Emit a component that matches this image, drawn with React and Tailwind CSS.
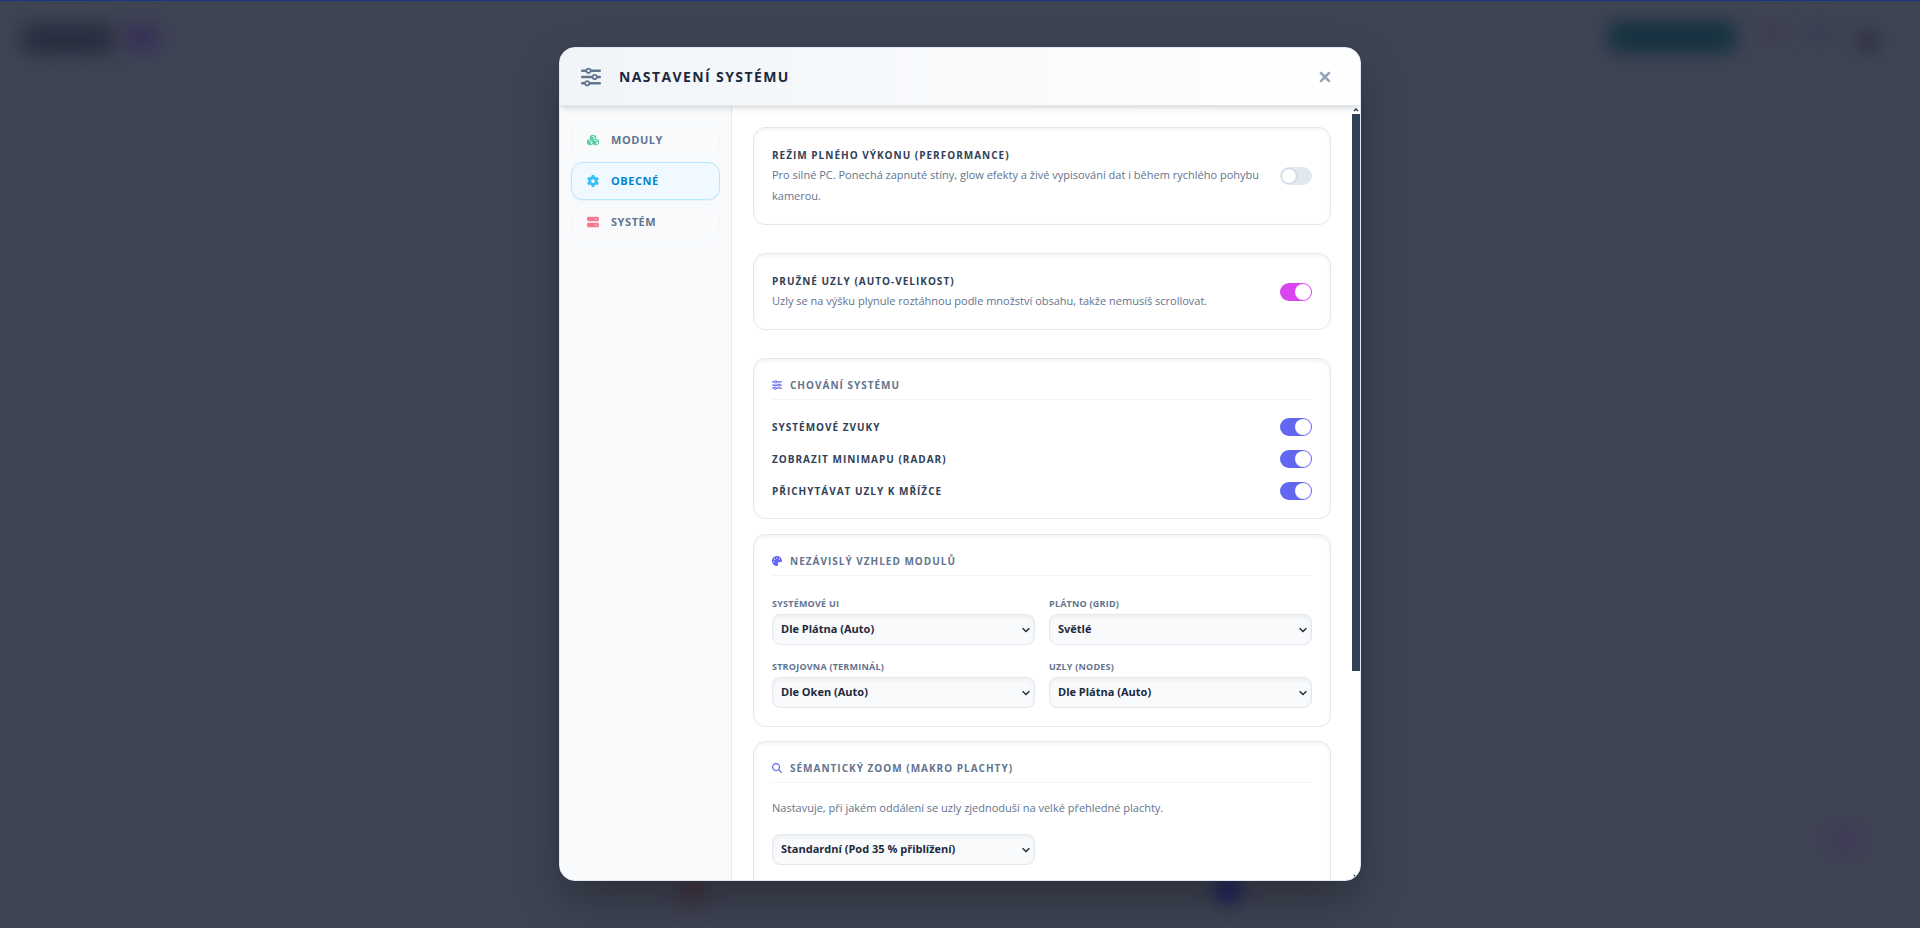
import { useState } from "react";
import { FaCubes, FaGear, FaMagnifyingGlass, FaPalette, FaServer, FaSliders, FaXmark } from "react-icons/fa6";

const tabs = [
  { id: "modules", label: "Moduly", icon: FaCubes, iconClass: "text-[#10b981]/70" },
  { id: "general", label: "Obecné", icon: FaGear, iconClass: "text-[#38bdf8]" },
  { id: "system", label: "Systém", icon: FaServer, iconClass: "text-[#f43f5e]/70" },
];

const behaviour = [
  { id: "sounds", label: "Systémové zvuky" },
  { id: "minimap", label: "Zobrazit minimapu (radar)" },
  { id: "snap", label: "Přichytávat uzly k mřížce" },
];

const themes = ["Dle Plátna (Auto)", "Dle Oken (Auto)", "Světlé", "Tmavé"];

const appearance = [
  { id: "theme-ui", label: "Systémové UI", value: "Dle Plátna (Auto)" },
  { id: "theme-grid", label: "Plátno (Grid)", value: "Světlé" },
  { id: "theme-terminal", label: "Strojovna (Terminál)", value: "Dle Oken (Auto)" },
  { id: "theme-nodes", label: "Uzly (Nodes)", value: "Dle Plátna (Auto)" },
];

function Toggle({ id, checked = false, color = "peer-checked:bg-[#6366f1]" }) {
  const [on, setOn] = useState(checked);

  return (
    <span className="relative block h-[18px] w-8 shrink-0">
      <input
        id={id}
        type="checkbox"
        checked={on}
        onChange={(event) => setOn(event.target.checked)}
        className="peer absolute inset-0 z-10 cursor-pointer opacity-0"
      />
      <span className={`block h-full rounded-full bg-slate-200 ${color}`} />
      <span className="absolute top-0.5 left-0.5 h-3.5 w-3.5 rounded-full bg-white ring-1 ring-slate-300 peer-checked:left-4 peer-checked:ring-white" />
    </span>
  );
}

function Card({ className = "", children }) {
  return (
    <section className={`rounded-xl border border-slate-200 bg-white p-[18px] shadow-[inset_0_2px_4px_rgba(0,0,0,0.05)] ${className}`}>
      {children}
    </section>
  );
}

function CardTitle({ icon: Icon, children }) {
  return (
    <h3 className="flex items-center gap-2 border-b border-slate-100 pb-1.5 text-[10px] leading-4 font-bold tracking-widest text-slate-500 uppercase">
      <Icon className="text-[10px] text-[#6366f1]" />
      {children}
    </h3>
  );
}

function Select({ id, value, options }) {
  return (
    <div className="relative">
      <select
        id={id}
        defaultValue={value}
        className="block h-[31px] w-full appearance-none rounded-lg border border-slate-200 bg-slate-50 pr-5 pl-2 text-[11px] font-bold text-slate-800 shadow-[inset_0_2px_4px_rgba(0,0,0,0.05)]"
      >
        {options.map((option) => (
          <option key={option}>{option}</option>
        ))}
      </select>
      <svg
        viewBox="0 0 8 8"
        className="pointer-events-none absolute inset-y-0 right-[5px] my-auto h-2 w-2 fill-none stroke-slate-800 stroke-[1.4]"
        aria-hidden="true"
      >
        <path d="M.6 2.2 4 5.6l3.4-3.4" />
      </svg>
    </div>
  );
}

function SwitchCard({ id, title, text, checked, color }) {
  return (
    <Card className="mb-7 flex items-center justify-between gap-4">
      <label htmlFor={id}>
        <span className="block text-[10px] leading-[18px] font-bold tracking-widest text-slate-700 uppercase">{title}</span>
        <span className="block text-[11px] leading-[21px] text-slate-500">{text}</span>
      </label>
      <Toggle id={id} checked={checked} color={color} />
    </Card>
  );
}

function Backdrop() {
  return (
    <div className="absolute inset-0 flex flex-col justify-between overflow-hidden border-t border-[#153681] bg-[#3f4454]" aria-hidden="true">
      <div className="flex justify-between px-5 pt-5">
        <div className="flex gap-2 pt-1">
          <span className="h-7 w-24 rounded-full bg-[#262b3d] blur-[10px]" />
          <span className="h-6 w-9 rounded-full bg-[#352c58] blur-[10px]" />
        </div>
        <div className="flex gap-6 pr-5">
          <span className="h-8 w-32 rounded-lg bg-[#163240] blur-[9px]" />
          <span className="h-6 w-6 rounded-full bg-[#3c3d4f] blur-[9px]" />
          <span className="h-6 w-6 rounded-full bg-[#393c50] blur-[9px]" />
          <span className="mt-2 h-6 w-6 rounded-full bg-[#2f3243] blur-[9px]" />
        </div>
      </div>
      <div>
        <div className="flex justify-end pr-14">
          <span className="h-6 w-10 rounded-full bg-[#403656] blur-[12px]" />
        </div>
        <div className="mt-6 flex justify-center gap-[508px] pb-6">
          <span className="h-7 w-7 rounded-full bg-[#42303f] blur-[10px]" />
          <span className="h-7 w-7 rounded-full bg-[#21235c] blur-[8px]" />
        </div>
      </div>
    </div>
  );
}

export default function App() {
  const [activeTab, setActiveTab] = useState("general");

  return (
    <div className="relative flex h-screen items-center justify-center py-[47px] font-['Open_Sans','Noto_Sans',sans-serif]">
      <Backdrop />

      <div
        role="dialog"
        aria-labelledby="settings-title"
        className="relative flex h-full w-full max-w-[802px] flex-col overflow-hidden rounded-2xl border border-slate-200 bg-white shadow-[0_20px_50px_rgba(0,0,0,0.3)]"
      >
        <header className="relative z-10 flex items-center justify-between border-b border-slate-200 bg-linear-to-r from-slate-100 via-slate-50 to-white px-[21px] pt-[17px] pb-4 shadow-md">
          <div className="flex items-center gap-[18px]">
            <FaSliders className="text-xl text-slate-500" />
            <h2 id="settings-title" className="text-sm leading-6 font-bold tracking-widest text-slate-800 uppercase">
              Nastavení systému
            </h2>
          </div>
          <button type="button" aria-label="Zavřít" className="flex h-6 w-7 items-center justify-center text-base text-slate-400">
            <FaXmark className="stroke-current stroke-[24]" />
          </button>
        </header>

        <div className="flex min-h-0 flex-1">
          <nav className="flex w-[172px] shrink-0 flex-col gap-[3px] border-r border-slate-200 bg-slate-50 px-[11px] py-[15px]">
            {tabs.map(({ id, label, icon: Icon, iconClass }) => (
              <button
                key={id}
                type="button"
                onClick={() => setActiveTab(id)}
                className={`flex h-[38px] items-center gap-3 rounded-xl border px-[15px] text-[11px] font-bold tracking-wider uppercase ${
                  activeTab === id ? "border-sky-200 bg-sky-50 text-sky-600 shadow-xs" : "border-slate-100/60 text-slate-500"
                }`}
              >
                <Icon className={`text-xs ${iconClass}`} />
                {label}
              </button>
            ))}
          </nav>

          <main className="min-w-0 flex-1 overflow-y-auto px-[21px] pt-[21px] [scrollbar-width:none]">
            <SwitchCard
              id="performance"
              title="Režim plného výkonu (Performance)"
              text="Pro silné PC. Ponechá zapnuté stíny, glow efekty a živé vypisování dat i během rychlého pohybu kamerou."
            />
            <SwitchCard
              id="auto-size"
              title="Pružné uzly (Auto-velikost)"
              text="Uzly se na výšku plynule roztáhnou podle množství obsahu, takže nemusíš scrollovat."
              checked
              color="peer-checked:bg-[#d946ef]"
            />

            <Card className="mb-[15px]">
              <CardTitle icon={FaSliders}>Chování systému</CardTitle>
              <div className="mt-[18px] flex flex-col gap-3.5">
                {behaviour.map((item) => (
                  <div key={item.id} className="flex items-center justify-between">
                    <label htmlFor={item.id} className="text-[10px] leading-[18px] font-bold tracking-widest text-slate-700 uppercase">
                      {item.label}
                    </label>
                    <Toggle id={item.id} checked />
                  </div>
                ))}
              </div>
            </Card>

            <Card className="mb-3.5">
              <CardTitle icon={FaPalette}>Nezávislý vzhled modulů</CardTitle>
              <div className="mt-5 grid grid-cols-2 gap-3.5">
                {appearance.map((item) => (
                  <div key={item.id}>
                    <label htmlFor={item.id} className="mb-0.5 block text-[9px] leading-4 font-bold tracking-wide text-slate-500 uppercase">
                      {item.label}
                    </label>
                    <Select id={item.id} value={item.value} options={themes} />
                  </div>
                ))}
              </div>
            </Card>

            <Card className="mb-[21px]">
              <CardTitle icon={FaMagnifyingGlass}>Sémantický zoom (makro plachty)</CardTitle>
              <label htmlFor="zoom-level" className="mt-3.5 mb-4 block text-[11px] leading-[21px] text-slate-500">
                Nastavuje, při jakém oddálení se uzly zjednoduší na velké přehledné plachty.
              </label>
              <div className="grid grid-cols-2 gap-3.5">
                <Select id="zoom-level" value="Standardní (Pod 35 % přiblížení)" options={["Standardní (Pod 35 % přiblížení)"]} />
              </div>
              <div className="h-64" />
            </Card>
          </main>

          <div className="flex w-2 shrink-0 flex-col" aria-hidden="true">
            <svg viewBox="0 0 8 8" className="h-2 w-2 fill-none stroke-slate-700 stroke-[1.5]">
              <path d="M2 5l2-2 2 2" />
            </svg>
            <div className="flex-1">
              <div className="h-[73.5%] bg-slate-700" />
            </div>
            <svg viewBox="0 0 8 8" className="h-2 w-2 fill-none stroke-slate-700 stroke-[1.5]">
              <path d="M2 3l2 2 2-2" />
            </svg>
          </div>
        </div>
      </div>
    </div>
  );
}
